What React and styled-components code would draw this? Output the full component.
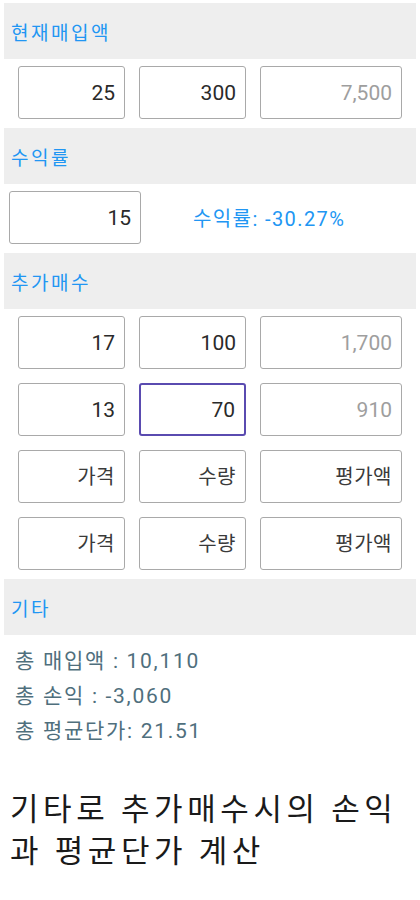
import React from "react";
import styled, { createGlobalStyle } from "styled-components";

const GlobalStyle = createGlobalStyle`
    body {
        margin: 0;
        background: #ffffff;
        font-family: Roboto, "Noto Sans CJK KR", sans-serif;
    }
`;

const data = {
    current: { price: "25", qty: "300", total: "7,500" },
    rate: "15",
    rateText: "수익률: -30.27%",
    extra: [
        { price: "17", qty: "100", total: "1,700" },
        { price: "13", qty: "70", total: "910", focused: true },
        { price: "", qty: "", total: "" },
        { price: "", qty: "", total: "" },
    ],
    summary: ["총 매입액 : 10,110", "총 손익 : -3,060", "총 평균단가: 21.51"],
    footer: "기타로 추가매수시의 손익과 평균단가 계산",
};

const App = () => {
    return (
        <React.Fragment>
            <GlobalStyle />
            <Page>
                <SectionHeader>현재매입액</SectionHeader>
                <InputGrid>
                    <Field value={data.current.price} readOnly />
                    <Field value={data.current.qty} readOnly />
                    <Field value={data.current.total} readOnly disabled />
                </InputGrid>

                <SectionHeader>수익률</SectionHeader>
                <RateRow>
                    <Field $width="132px" value={data.rate} readOnly />
                    <RateText>{data.rateText}</RateText>
                </RateRow>

                <SectionHeader>추가매수</SectionHeader>
                <InputGrid>
                    {data.extra.map((row, i) => (
                        <React.Fragment key={i}>
                            <Field value={row.price} placeholder="가격" readOnly />
                            <Field value={row.qty} placeholder="수량" readOnly $focused={row.focused} />
                            <Field value={row.total} placeholder="평가액" readOnly disabled />
                        </React.Fragment>
                    ))}
                </InputGrid>

                <SectionHeader>기타</SectionHeader>
                <Summary>
                    {data.summary.map((line) => (
                        <SummaryLine key={line}>{line}</SummaryLine>
                    ))}
                </Summary>

                <Footer>{data.footer}</Footer>
            </Page>
        </React.Fragment>
    );
};

const Page = styled.div`
    padding: 3px 4px 0 4px;
    width: 412px;
`;

const SectionHeader = styled.div`
    height: 56px;
    display: flex;
    align-items: center;
    padding-left: 7px;
    background-color: #eeeeee;
    color: #2196f3;
    font-size: 19px;
    letter-spacing: 2.5px;
    font-family: "Noto Sans CJK KR", sans-serif;
`;

const InputGrid = styled.div`
    display: grid;
    grid-template-columns: 107px 107px 142px;
    grid-auto-rows: 53px;
    column-gap: 14px;
    row-gap: 14px;
    padding: 7px 0 9px 14px;
`;

const Field = styled.input`
    box-sizing: border-box;
    width: ${(props) => props.$width || "100%"};
    height: 53px;
    margin: 0;
    padding: 0 9px 0 0;
    text-align: right;
    font-family: Roboto, "Noto Sans CJK KR", sans-serif;
    font-size: 21px;
    color: #2a2a2a;
    background: #ffffff;
    border: ${(props) => (props.$focused ? "2px solid #5a4bb0" : "1px solid #a9a9a9")};
    border-radius: 3px;
    outline: none;

    &:disabled {
        color: #9e9e9e;
        -webkit-text-fill-color: #9e9e9e;
        opacity: 1;
    }

    &::placeholder {
        color: #3a3a3a;
        -webkit-text-fill-color: #3a3a3a;
        opacity: 1;
        font-size: 20px;
        letter-spacing: 0.5px;
        font-family: "Noto Sans CJK KR", sans-serif;
    }
`;

const RateRow = styled.div`
    display: flex;
    align-items: center;
    gap: 52px;
    padding: 7px 0 9px 5px;
`;

const RateText = styled.span`
    color: #2196f3;
    font-size: 20px;
    letter-spacing: 1.4px;
    font-family: Roboto, "Noto Sans CJK KR", sans-serif;
`;

const Summary = styled.div`
    display: flex;
    flex-direction: column;
    padding: 6px 0 0 11px;
`;

const SummaryLine = styled.div`
    height: 35px;
    display: flex;
    align-items: center;
    font-size: 21px;
    letter-spacing: 1.7px;
    color: #4f6f7d;
`;

const Footer = styled.div`
    margin-top: 40px;
    padding: 0 8px 0 6px;
    font-family: "Noto Sans CJK KR", sans-serif;
    font-size: 31px;
    letter-spacing: 4.6px;
    line-height: 42px;
    color: #1a1a1a;
`;

export default App;
